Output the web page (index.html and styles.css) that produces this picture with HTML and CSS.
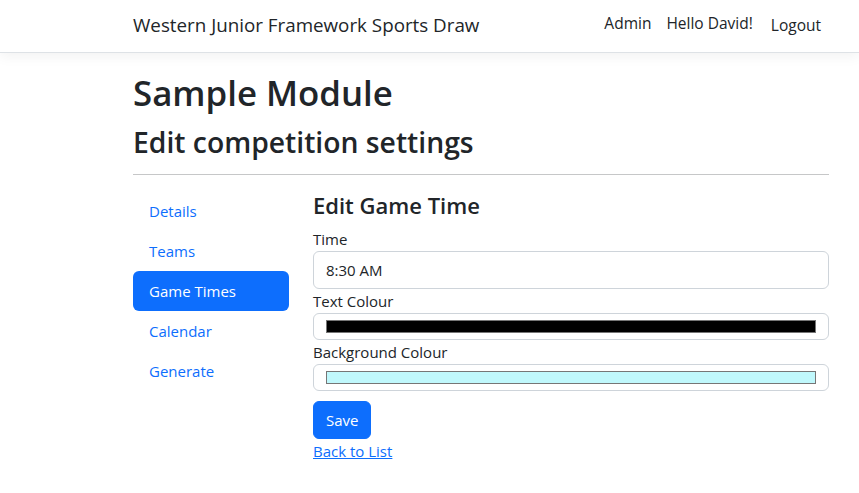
FILE: index.html
```html
<!DOCTYPE html>
<html lang="en">
<head>
<meta charset="utf-8">
<title>Edit Game Time - Western Junior Framework Sports Draw</title>
<link rel="stylesheet" href="styles.css">
</head>
<body>
<header class="navbar">
  <div class="container nav-inner">
    <a class="brand" href="#">Western Junior Framework Sports Draw</a>
    <ul class="nav-right">
      <li><a class="nav-link" href="#">Admin</a></li>
      <li><a class="nav-link" href="#">Hello David!</a></li>
      <li><button class="nav-link logout" type="button">Logout</button></li>
    </ul>
  </div>
</header>
<main class="container main">
  <h1 class="title">Sample Module</h1>
  <h2 class="subtitle">Edit competition settings</h2>
  <hr class="divider">
  <div class="row">
    <nav class="side">
      <a class="pill" href="#">Details</a>
      <a class="pill" href="#">Teams</a>
      <a class="pill active" href="#">Game Times</a>
      <a class="pill" href="#">Calendar</a>
      <a class="pill" href="#">Generate</a>
    </nav>
    <section class="content">
      <h4 class="section-title">Edit Game Time</h4>
      <form class="form">
        <label class="label" for="time">Time</label>
        <input class="control" id="time" type="text" value="8:30 AM">
        <label class="label" for="tc">Text Colour</label>
        <input class="control color" id="tc" type="color" value="#000000">
        <label class="label" for="bc">Background Colour</label>
        <input class="control color" id="bc" type="color" value="#c0f8fc">
        <div class="actions">
          <button class="btn" type="button">Save</button>
        </div>
      </form>
      <a class="back" href="#">Back to List</a>
    </section>
  </div>
</main>
</body>
</html>
```
FILE: styles.css
```css
* { box-sizing: border-box; }
html, body { margin: 0; padding: 0; }
body {
  font-family: "Open Sans", "Noto Sans", sans-serif;
  font-size: 15px;
  line-height: 24px;
  color: #212529;
  background: #fff;
}
a { color: #0d6efd; text-decoration: none; }
.container {
  width: 720px;
  margin-left: 121px;
  padding: 0 12px;
}
.navbar {
  height: 53px;
  border-bottom: 1px solid #dee2e6;
  box-shadow: 0 4px 12px rgba(0,0,0,.05);
  background: #fff;
}
.nav-inner {
  height: 52px;
  display: flex;
  align-items: center;
  justify-content: space-between;
}
.brand {
  font-size: 18.8px;
  color: #212529;
  line-height: 30px;
  margin-top: -2px;
}
.nav-right {
  list-style: none;
  margin: 0;
  padding: 0;
  display: flex;
  align-items: center;
}
.nav-link {
  display: block;
  padding: 0 8px;
  color: #212529;
  font: inherit;
  font-size: 15.5px;
  line-height: 24px;
  background: none;
  border: 0;
}
.nav-right li:first-child .nav-link { margin-top: -6px; margin-right: -1px; }
.nav-right li:nth-child(2) .nav-link { margin-top: -6px; margin-right: 2px; }
.logout { margin-top: -2px; }
.main { padding-top: 20px; }
.title {
  margin: 0 0 11px;
  font-size: 34.8px;
  font-weight: 600;
  line-height: 40px;
}
.subtitle {
  margin: 0;
  font-size: 28.3px;
  font-weight: 600;
  line-height: 36px;
}
.divider {
  margin: 14px 0 16px;
  border: 0;
  border-top: 1px solid #c6c7c8;
}
.row {
  display: flex;
  gap: 24px;
}
.side {
  width: 156px;
  flex: none;
  display: flex;
  flex-direction: column;
}
.pill {
  display: block;
  padding: 8px 16px;
  line-height: 24px;
  border-radius: 6px;
}
.pill.active { background: #0d6efd; color: #fff; }
.content { flex: 1; }
.section-title {
  margin: 0 0 8px;
  font-size: 22px;
  font-weight: 600;
  line-height: 28px;
}
.form { display: flex; flex-direction: column; }
.label { display: block; line-height: 24px; }
.control {
  display: block;
  width: 100%;
  height: 38px;
  padding: 6px 12px;
  font: inherit;
  font-size: 15px;
  line-height: 24px;
  color: #212529;
  border: 1px solid #ced4da;
  border-radius: 6px;
  background: #fff;
}
.control.color {
  height: 27px;
  padding: 6px 12px;
  cursor: pointer;
  -webkit-appearance: none;
  appearance: none;
}
.control.color::-webkit-color-swatch-wrapper { padding: 0; }
.control.color::-webkit-color-swatch {
  border: 1px solid #767676;
  border-radius: 0;
}
.actions { margin-top: 10px; }
.btn {
  font: inherit;
  font-size: 15px;
  line-height: 24px;
  padding: 6px 12px;
  height: 38px;
  color: #fff;
  background: #0d6efd;
  border: 1px solid #0d6efd;
  border-radius: 6px;
}
.back { text-decoration: underline; display: inline-block; }
```
